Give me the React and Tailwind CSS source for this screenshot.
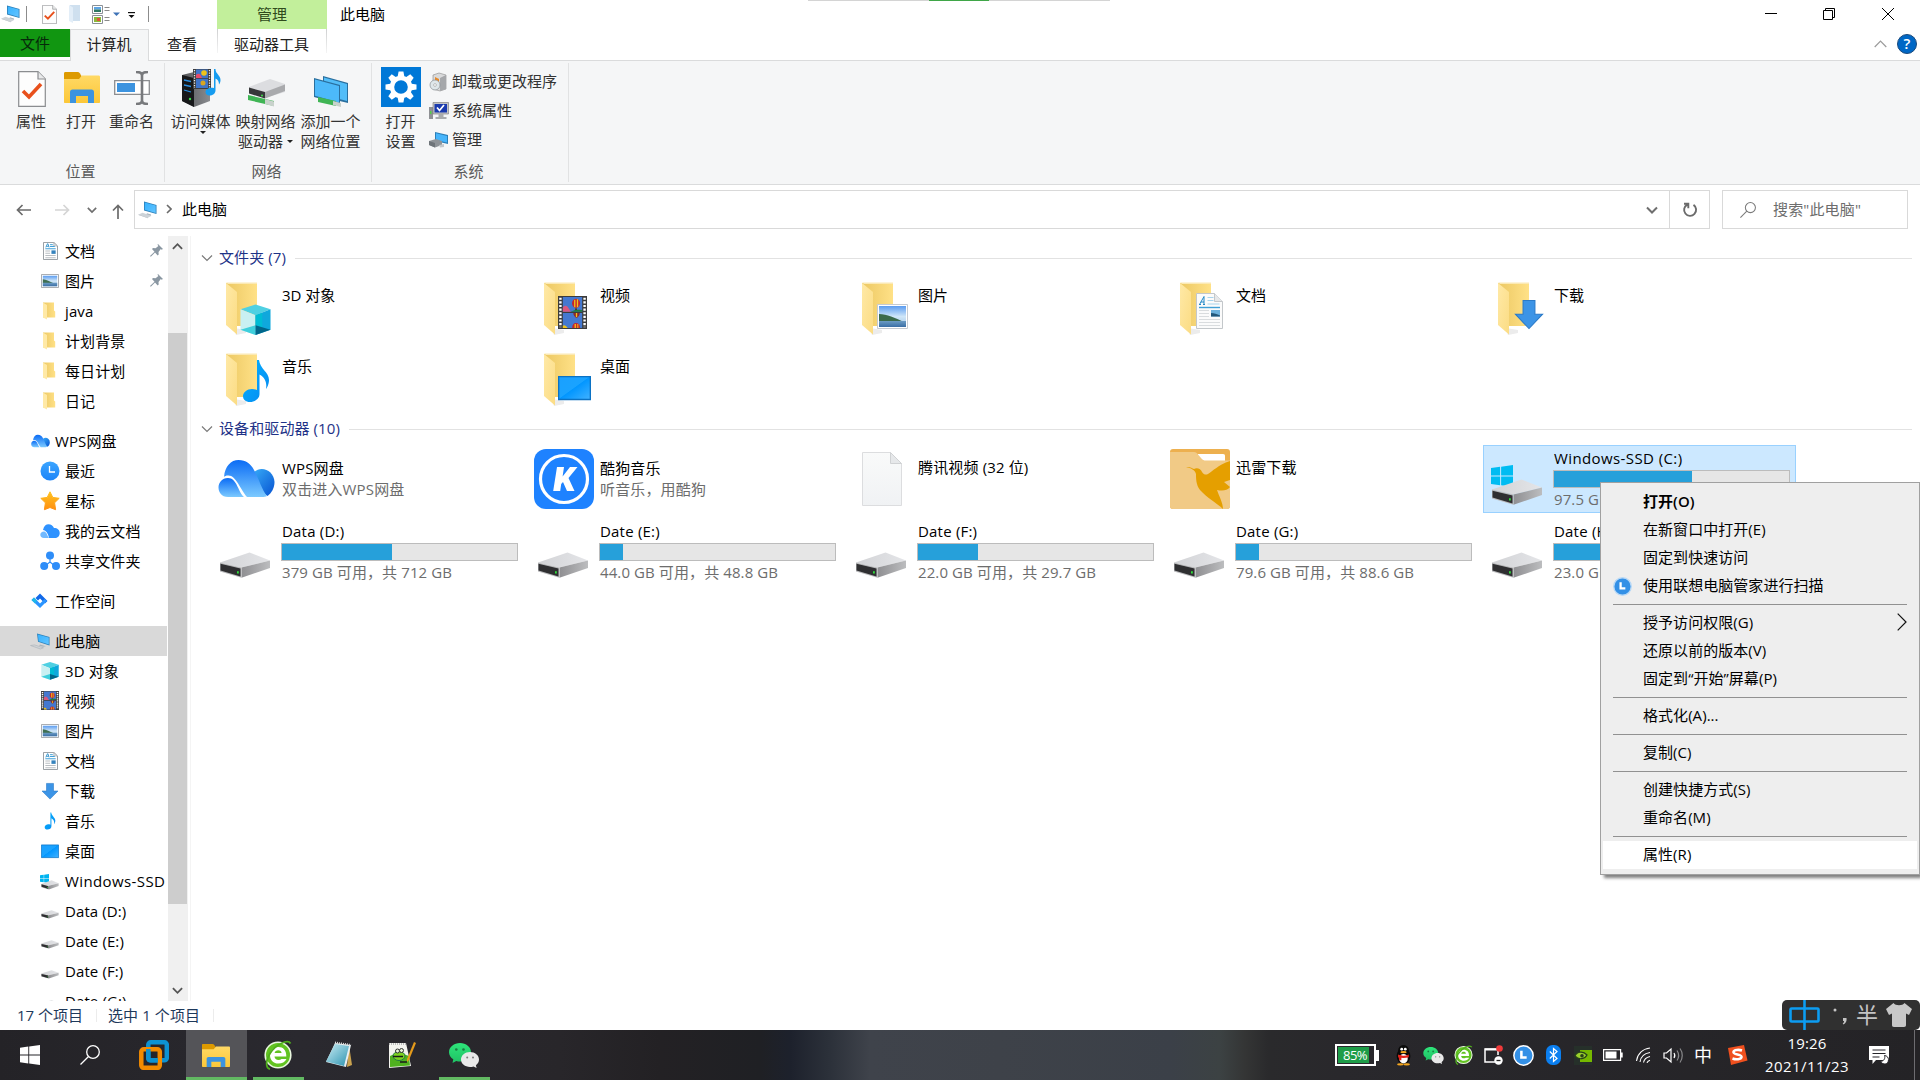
import React from 'react';

/* ---------- shared gradients ---------- */
function Defs() {
  return (
    <svg className="absolute w-0 h-0" aria-hidden="true">
      <defs>
        <linearGradient id="fBack" x1="0" y1="0" x2="1" y2="0"><stop offset="0" stopColor="#ecc863" /><stop offset="1" stopColor="#ffe187" /></linearGradient>
        <linearGradient id="fFront" x1="0" y1="0" x2="1" y2="1"><stop offset="0" stopColor="#ffe9a6" /><stop offset="1" stopColor="#fbdc84" /></linearGradient>
        <linearGradient id="dTop" x1="0" y1="0" x2="1" y2="0"><stop offset="0" stopColor="#d2d3d6" /><stop offset="1" stopColor="#e4e5e8" /></linearGradient>
        <linearGradient id="dSide" x1="0" y1="0" x2="1" y2="0"><stop offset="0" stopColor="#8f8f92" /><stop offset="1" stopColor="#bcbdbf" /></linearGradient>
        <linearGradient id="scr" x1="0" y1="0" x2="1" y2="1"><stop offset="0" stopColor="#35b2ff" /><stop offset="1" stopColor="#63c4ff" /></linearGradient>
        <linearGradient id="sky" x1="0" y1="0" x2="0" y2="1"><stop offset="0" stopColor="#5b9cf0" /><stop offset=".5" stopColor="#cfe6f8" /><stop offset="1" stopColor="#a3c6e6" /></linearGradient>
        <linearGradient id="sea" x1="0" y1="0" x2="0" y2="1"><stop offset="0" stopColor="#6c9cc4" /><stop offset="1" stopColor="#3a6ea5" /></linearGradient>
        <linearGradient id="note" x1="0" y1="0" x2="1" y2="1"><stop offset="0" stopColor="#04b3ff" /><stop offset="1" stopColor="#0789f0" /></linearGradient>
        <linearGradient id="desk" x1="0" y1="0" x2="1" y2="1"><stop offset="0" stopColor="#1aa0ff" /><stop offset=".48" stopColor="#1aa3ff" /><stop offset=".5" stopColor="#0296ff" /><stop offset="1" stopColor="#42b2ff" /></linearGradient>
        <linearGradient id="c1" x1="0" y1="0" x2="0" y2="1"><stop offset="0" stopColor="#0b6cf5" /><stop offset="1" stopColor="#7ccaff" /></linearGradient>
        <linearGradient id="c2" x1="0" y1="0" x2="1" y2="1"><stop offset="0" stopColor="#38adf8" /><stop offset="1" stopColor="#0753d2" /></linearGradient>
        <linearGradient id="blu" x1="0" y1="0" x2="0" y2="1"><stop offset="0" stopColor="#3ba5ff" /><stop offset="1" stopColor="#1c84f8" /></linearGradient>
        <linearGradient id="star" x1="0" y1="0" x2="0" y2="1"><stop offset="0" stopColor="#ffc31f" /><stop offset="1" stopColor="#ff8f12" /></linearGradient>
        <linearGradient id="papr" x1="0" y1="0" x2="0" y2="1"><stop offset="0" stopColor="#f9fafa" /><stop offset="1" stopColor="#f0f2f4" /></linearGradient>
        <linearGradient id="exp" x1="0" y1="0" x2="0" y2="1"><stop offset="0" stopColor="#ffd965" /><stop offset="1" stopColor="#fcc738" /></linearGradient>
        <linearGradient id="grn" x1="0" y1="0" x2="0" y2="1"><stop offset="0" stopColor="#2ee57a" /><stop offset="1" stopColor="#1fc064" /></linearGradient>
        <linearGradient id="npad" x1="0" y1="0" x2="1" y2="1"><stop offset="0" stopColor="#c9ecf4" /><stop offset="1" stopColor="#2c93b0" /></linearGradient>
        <linearGradient id="tower" x1="0" y1="0" x2="1" y2="0"><stop offset="0" stopColor="#55575a" /><stop offset="1" stopColor="#8a8c90" /></linearGradient>
      </defs>
    </svg>
  );
}

/* ---------- base icons ---------- */
function PC({ className = 'w-5 h-5' }) {
  return (
    <svg className={className} viewBox="0 0 20 20">
      <path d="M6 1.500 18.500 5v9L6 10.500z" fill="#2b7fb8" />
      <path d="M6.800 2.500 17.700 5.600v7.300L6.800 9.700z" fill="url(#scr)" />
      <path d="m9 13.300 4 1.200v1.200l-3 .6-2.500-.8z" fill="#aab4bc" />
      <path d="m.5 14.400 4-1.600 9 2.900-3.500 2z" fill="#cdd3d8" />
      <path d="m.5 14.400 9.500 3.300v.6l-9.500-3.300z" fill="#a3abb2" />
    </svg>
  );
}
function PCSmall() {
  return (
    <svg className="w-5 h-5" viewBox="0 0 20 20">
      <path d="M7 2.500 19.500 6v8.500L8 10.800z" fill="#2b7fb8" />
      <path d="M7.800 3.500 18.800 6.600v6.900L8.700 10.200z" fill="url(#scr)" />
      <path d="m.5 14.500 4-.6 9 2.900-3 1.200z" fill="#cfd3d6" stroke="#a3abb2" strokeWidth=".5" />
      <path d="m10 13.500 6 1.700-3 .6-4-1.200z" fill="#aab4bc" />
    </svg>
  );
}
function Cube({ className = 'w-5 h-5' }) {
  return (
    <svg className={className} viewBox="0 0 32 32">
      <path d="M16 0 31.500 5 16 11 .5 5z" fill="#4fd0e2" />
      <path d="M.5 5 16 11v20.500L.5 26z" fill="#c9f0f2" />
      <path d="M31.500 5 16 11v20.500L31.500 26z" fill="#0fa8dc" />
      <path d="M16 11 23 8.500V24L16 21.500z" fill="#00bcd4" />
      <path d="M.5 26 16 21.500v10z" fill="#3fcfdc" />
      <path d="M31.500 26 16 21.500v10z" fill="#00668a" />
    </svg>
  );
}
function Film({ className = 'w-5 h-5' }) {
  return (
    <svg className={className} viewBox="0 0 18 20" preserveAspectRatio="none">
      <path d="M0 0h18v20H0z" fill="#3c3c3c" />
      <path d="M3 .6h12v8.900H3zM3 10.300h12v9.100H3z" fill="#4478cf" />
      <path d="M3 7c1-1.600 2-1.200 3-.5l2 3H3z" fill="#d9587e" />
      <path d="M3 18c1-.8 2 0 3 1.400H3z" fill="#f0c419" />
      <path d="M8 9.500c2-1.200 4-1.500 7-1v1z" fill="#1f7a3d" />
      <ellipse cx="11.200" cy="4.400" rx="2.500" ry="2.800" fill="#c6252c" /><path d="M10 2.200h.8v4.600H10zM11.700 2h.8v4.800h-.8z" fill="#f0c419" /><path d="M10.600 7.500h1.200v1h-1.200z" fill="#5a3a1a" />
      <path d="M9.500 10.300h4c0 1.500-1 2.500-2 3-1-.5-2-1.500-2-3z" fill="#8e2a2a" /><path d="M11.100 10.300h.8v2.500h-.8z" fill="#f0c419" />
      <path d="M8.800 19.400c0-2 1-3 2.400-3s2.500 1 2.500 3z" fill="#c6252c" /><path d="M10.300 17h.8v2.400h-.8zM12 17h.6v2.400H12z" fill="#f0c419" />
      <path d="M1.500 1v18M16.500 1v18" stroke="#fff" strokeWidth="1.500" strokeDasharray="1.300 .9" />
    </svg>
  );
}
function Photo({ className = 'w-5 h-5' }) {
  return (
    <svg className={className} viewBox="0 0 20 16" preserveAspectRatio="none">
      <path d="M.5.500h19v15H.5z" fill="#fff" stroke="#9a9ea3" />
      <path d="M2 2h16v12H2z" fill="url(#sky)" />
      <path d="M2 6c4 .5 8 2.500 12 4.500H2z" fill="#3f6f52" />
      <path d="M2 10h16v4H2z" fill="url(#sea)" />
    </svg>
  );
}
function Doc({ className = 'w-5 h-5' }) {
  return (
    <svg className={className} viewBox="0 0 16 20" preserveAspectRatio="none">
      <path d="M.5.500h11L15.500 4.500v15H.5z" fill="#fff" stroke="#8f959b" />
      <path d="M11.500.500v4h4z" fill="#dfe3e6" stroke="#8f959b" strokeWidth=".6" />
      <path d="m3 6 1.700-4h.6L6.500 6M3.700 4.800h2.300" stroke="#1e88c7" strokeWidth=".9" fill="none" />
      <path d="M7.500 3h3M7.500 5h5M2.500 7.500h11" stroke="#2f97d4" strokeWidth="1" />
      <path d="M2.500 10h5M2.500 12.500h5M2.500 15h11M2.500 17.500h11" stroke="#a9afb5" strokeWidth=".9" />
      <path d="M9 9.300h4.500v3.900H9z" fill="#3683bd" />
    </svg>
  );
}
function SmallFolder() {
  return (
    <svg className="w-5 h-5" viewBox="0 0 20 20">
      <path d="M3 1.500h11v8l1.200 1v6H3z" fill="url(#fBack)" />
      <path d="m3 1.500 4 2.500v14.500l-4-2z" fill="#ffe9a6" />
    </svg>
  );
}
function Arrow({ className = 'w-5 h-5' }) {
  return <svg className={className} viewBox="0 0 20 20" preserveAspectRatio="none"><path d="M6.500 1.500h7v8H18L10 18 2 9.500h4.500z" fill="#3c94e6" stroke="#2a7ac8" strokeWidth=".6" /></svg>;
}
function Note({ className = 'w-5 h-5' }) {
  return (
    <svg className={className} viewBox="0 0 28 44">
      <path d="M15 1h2c1 9 10 12 10 20 0 4-2 8-3 9 1-6-.5-11-6.500-14.500V35c0 5-5 8-9.500 8S1 40.500 1 37s4-7 9-7c2 0 3.500.4 5 1z" fill="url(#note)" />
    </svg>
  );
}
function Desk({ className = 'w-5 h-5' }) {
  return (
    <svg className={className} viewBox="0 0 20 16" preserveAspectRatio="none">
      <path d="M.4 1h19.200v13.500H.4z" fill="url(#desk)" stroke="#0b72c4" strokeWidth=".8" />
    </svg>
  );
}
function Drive({ className = 'w-5 h-5' }) {
  return (
    <svg className={className} viewBox="0 0 52 27" preserveAspectRatio="none">
      <path d="m1 10.500 29.500-10 20.500 8-28.500 7z" fill="url(#dTop)" />
      <path d="M22.500 15.500 51 8.500v7.500L22.500 25.800z" fill="url(#dSide)" />
      <path d="m1 10.500 21.500 5v10.300L1 19.500z" fill="#b9babc" />
      <path d="m1.500 11.800 20 4.800v8L1.500 18.500z" fill="#2f2f31" />
      <path d="M18 19.200h1.800v2.400H18z" fill="#2fe03a" />
    </svg>
  );
}
function Win({ className = 'w-5 h-5', fill = '#fff' }) {
  return (
    <svg className={className} viewBox="0 0 20 20">
      <path d="M0 2.800 8.300 1.600v7.900H0zM9.200 1.500 20 0v9.500H9.200zM0 10.400h8.300v8L0 17.200zM9.200 10.400H20V20L9.200 18.500z" fill={fill} />
    </svg>
  );
}
function Cloud({ className = 'w-5 h-5' }) {
  return (
    <svg className={className} viewBox="0 0 57 39">
      <path d="M36 13c8-7 20-1 20.500 10 0 6-3 11-7 14L34 26z" fill="url(#c2)" />
      <path d="M6 18C7 7 13 1 20.500 1 28 1 33 5 36 11c5 9 8 20 13 26-1 .7-3 1-5 1H29C22 30 18 16 10 16.500c-2 0-3 .5-4 1.500z" fill="url(#c1)" />
      <path d="M10 19c9 0 10 14 16 19H10C3.500 38 .5 33 .5 28.500S4 19 10 19z" fill="url(#c1)" />
    </svg>
  );
}
function Explorer({ className }) {
  return (
    <svg className={className} viewBox="0 0 36 31" preserveAspectRatio="none">
      <path d="M0 1.500C0 .5.500 0 1.500 0h12c1 0 1.700.4 2.300 1.200L17.500 4v4H0z" fill="#dd9a00" />
      <path d="M0 7h15l3-3.500h16.500c1 0 1.500.5 1.500 1.500v25c0 .6-.4 1-1 1H1c-.6 0-1-.4-1-1z" fill="url(#exp)" />
      <path d="M6 20c0-1.500 1-2.500 2.500-2.500h19c1.500 0 2.500 1 2.500 2.500v14h-6V24H12v10H6z" fill="#3c93df" />
    </svg>
  );
}
function CheckPage({ className }) {
  return (
    <svg className={className} viewBox="0 0 28 36">
      <path d="M.7.700H20L27.300 8v27.300H.7z" fill="#fdfdfd" stroke="#8b8d90" strokeWidth="1.200" />
      <path d="M20 .7V8h7.300" fill="#e8e9ea" stroke="#8b8d90" strokeWidth="1.200" />
      <path d="m5 20 6 6L23 13" fill="none" stroke="#e8501c" strokeWidth="3.600" />
    </svg>
  );
}
function LCircle({ className, ring = '#fff' }) {
  return (
    <svg className={className} viewBox="0 0 20 20">
      <circle cx="10" cy="10" r="9.200" fill="#3390e6" stroke={ring} strokeWidth="1.400" />
      <path d="M8 5.500V12h5" fill="none" stroke="#fff" strokeWidth="2.400" />
    </svg>
  );
}
function WeChat({ className }) {
  return (
    <svg className={className} viewBox="0 0 30 25">
      <path d="M11 0c6 0 11 4 11 9.200S17 18.500 11 18.500c-1.300 0-2.600-.2-3.700-.6L3.500 20l.8-3.700C1.700 14.600 0 12 0 9.200 0 4 5 0 11 0z" fill="url(#grn)" />
      <path d="M21 9c5 0 9 3.300 9 7.600 0 2.300-1.200 4.300-3.100 5.700l.7 2.600-3.100-1.500c-1.100.4-2.300.6-3.500.6-5 0-9-3.200-9-7.400S16 9 21 9z" fill="#e9e9e9" />
      <g fill="#1b7c44"><circle cx="7.300" cy="6.500" r="1.300" /><circle cx="14.500" cy="6.500" r="1.300" /></g>
      <g fill="#7c7c7c"><circle cx="18.200" cy="14.500" r="1" /><circle cx="24" cy="14.500" r="1" /></g>
    </svg>
  );
}
function E360({ className }) {
  return (
    <svg className={className} viewBox="0 0 28 30">
      <circle cx="14" cy="15" r="12.800" fill="#62c322" stroke="#e9f7df" strokeWidth="1.600" />
      <path d="M22.500 19c-1.500 3-4.500 4.500-8 4.500-5 0-8.500-3.500-8.500-8.300S9.500 7 14.300 7c5 0 8.200 3.300 8 9.500H10.500c.2 2 1.700 3.500 4 3.500 1.300 0 2.300-.3 3-1zM10.600 13h7c-.2-1.700-1.400-2.700-3.300-2.700s-3.300 1-3.700 2.700z" fill="#fff" />
      <path d="M26.500 3.500C24-1 12 4 6 13.500 1.500 21 1.500 28 6 29" fill="none" stroke="#4fae1d" strokeWidth="1.800" />
    </svg>
  );
}
function Chevron({ className, color = '#6e6e6e', w = 1.2 }) {
  return <svg className={className} viewBox="0 0 12 12"><path d="m1 3.500 5 5 5-5" fill="none" stroke={color} strokeWidth={w} /></svg>;
}
function Tri({ className = 'w-[6px] h-[3px]' }) {
  return <svg className={className} viewBox="0 0 6 3"><path d="M0 0h6L3 3z" fill="#222" /></svg>;
}
function Lens({ className, stroke, w }) {
  return <svg className={className} viewBox="0 0 20 20" fill="none" stroke={stroke} strokeWidth={w}><circle cx="13" cy="7" r="6.300" /><path d="M8.500 11.500.5 19.500" /></svg>;
}

/* ---------- title bar and ribbon ---------- */
function TitleBar() {
  return (
    <div className="h-[29px] flex items-stretch">
      <div className="w-[217px] flex items-center pl-[1px] pb-px">
        <PC />
        <div className="w-px h-[16px] bg-[#8c8c8c] ml-[5px]" />
        <CheckPage className="w-[15px] h-[19px] ml-[15px]" />
        <svg className="w-[13px] h-[18px] ml-[11px]" viewBox="0 0 13 18"><path d="M2 0h10v16H2z" fill="#cfe0ef" /><path d="m1 0 4 2.500V18l-4-2z" fill="#e3eef8" /></svg>
        <svg className="w-[28px] h-[19px] ml-[11px]" viewBox="0 0 28 19"><path d="M.5.500h10v8H.5zM.5 10.500h10v8H.5z" fill="#fff" stroke="#8a9096" /><path d="M2 2h7v2.500H2z" fill="#5da4e4" /><path d="M2 4.500h7V7H2z" fill="#2f7a63" /><path d="M2 12h7v5H2z" fill="#8cb83a" /><path d="M5 13h3v3H5z" fill="#e0553a" /><path d="M12.500 2.500h5M12.500 5.500h5M12.500 12.500h5M12.500 15.500h5" stroke="#8a8a8a" /><path d="M21 7.500h7l-3.500 3.500z" fill="#3f73b7" /></svg>
        <svg className="w-[7px] h-[6px] ml-[8px] mt-[2px]" viewBox="0 0 7 6"><path d="M0 .6h7" stroke="#111" strokeWidth="1.200" /><path d="M.5 3h6l-3 3z" fill="#111" /></svg>
        <div className="w-px h-[16px] bg-[#8c8c8c] ml-[13px]" />
      </div>
      <div className="w-[110px] bg-[#c2ef9b] flex items-center justify-center pb-px text-[#2f4a1c]">管理</div>
      <div className="flex-1 flex items-center pl-[13px] pb-px text-black">此电脑</div>
      <div className="flex items-center pr-[26px] pb-[2px]">
        <svg className="w-[13px] h-[13px]" viewBox="0 0 13 13"><path d="M0 6.500h12" stroke="#000" /></svg>
        <svg className="w-[12px] h-[12px] ml-[45px]" viewBox="0 0 12 12" fill="none" stroke="#000"><path d="M.5 2.500h9v9h-9zM2.500 2.500v-2h9v9h-2" /></svg>
        <svg className="w-[12px] h-[12px] ml-[47px]" viewBox="0 0 12 12" stroke="#000"><path d="m0 0 12 12M12 0 0 12" /></svg>
      </div>
    </div>
  );
}
function Tabs() {
  return (
    <div className="h-[32px] flex items-stretch border-b border-[#dadbdc] text-[#222]">
      <div className="w-[70px] h-[28px] bg-[#119611] flex items-center justify-center text-[#06290a]">文件</div>
      <div className="w-[79px] h-[32px] relative z-10 bg-[#f5f6f7] border border-b-0 border-[#dadbdc] flex items-center justify-center pr-px pb-[2px]">计算机</div>
      <div className="w-[68px] flex items-center justify-center pr-[2px] pb-px">查看</div>
      <div className="w-[110px] mb-[7px] bg-linear-to-b from-[#cfd0d1] to-[#f4f4f4] px-px"><div className="h-[30px] pr-px bg-white flex items-center justify-center">驱动器工具</div></div>
      <div className="flex-1 flex items-center justify-end pr-[3px] pb-[2px]">
        <svg className="w-[13px] h-[8px]" viewBox="0 0 13 8"><path d="m.7 7 5.800-6 5.800 6" fill="none" stroke="#9b9b9b" strokeWidth="1.200" /></svg>
        <div className="w-5 h-5 ml-[10px] rounded-full bg-[#0067c5] border border-[#1b4a7c] text-white text-[15px] font-semibold leading-none flex items-center justify-center">?</div>
      </div>
    </div>
  );
}
function Big({ w, icon, lines, arrow, inline }) {
  return (
    <div className="flex flex-col items-center flex-none" style={{ width: w }}>
      <div className="h-[44px] flex items-end justify-center mb-[4px]">{icon}</div>
      {lines.map((l, i) => (
        <div key={l} className="h-[20px] flex items-center whitespace-nowrap">
          {l}{inline && i === lines.length - 1 && <Tri className="w-[6px] h-[3px] ml-[4px]" />}
        </div>
      ))}
      {arrow && <Tri className="w-[6px] h-[3px] ml-[4px]" />}
    </div>
  );
}
function Group({ w, label, children }) {
  return (
    <div className="flex flex-col border-r border-[#e1e2e3] h-[119px] mt-[2px] flex-none" style={{ width: w }}>
      <div className="flex h-[98px]">{children}</div>
      <div className="h-[20px] pr-[3px] flex items-center justify-center text-[#5a5a5a]">{label}</div>
    </div>
  );
}
function Ribbon() {
  return (
    <div className="h-[124px] bg-[#f5f6f7] border-b border-[#dadbdc] flex text-[#333]">
      <Group w={165} label="位置">
        <div className="w-[8px]" />
        <Big w={46} icon={<CheckPage className="w-[28px] h-[36px] ml-[2px]" />} lines={['属性']} />
        <Big w={54} icon={<Explorer className="w-[36px] h-[31px] mb-[4px] ml-[2px]" />} lines={['打开']} />
        <Big w={47} icon={
          <svg className="w-[36px] h-[34px] mb-[2px] ml-px" viewBox="0 0 36 34">
            <path d="M.7 9.700h34.600v13.600H.7z" fill="#fff" stroke="#8b8d90" strokeWidth="1.300" /><path d="M3 12h18v9H3z" fill="#3c93df" />
            <path d="M22 1c3 0 6 .5 6 3.500v25C28 32.500 25 33 22 33M34 1c-3 0-6 .5-6 3.500v25c0 3 3 3.500 6 3.500" fill="none" stroke="#77797c" strokeWidth="2.600" />
          </svg>} lines={['重命名']} />
      </Group>
      <Group w={207} label="网络">
        <div className="w-[3px]" />
        <Big w={65} arrow icon={
          <svg className="w-[40px] h-[38px]" viewBox="0 0 40 38">
            <path d="m1 6 12-3 16 3v26l-16 6-12-6z" fill="url(#tower)" /><path d="m1 6 12 3v29L1 32z" fill="#17181a" />
            <path d="m3 11 7 1.500M3 16l7 1.500M3 21l7 2" stroke="#2b8fe0" strokeWidth="1.300" /><circle cx="9" cy="30" r="1.200" fill="#3be04a" />
            <path d="M12 0h18v20H12z" fill="#3d3d3d" /><path d="M15 .6h12v8.600H15zM15 10h12v9H15z" fill="#3e74c9" /><path d="M15 6c3-3 5 0 6 3h-6z" fill="#e64a6a" /><circle cx="23" cy="4" r="2.800" fill="#f0c419" /><circle cx="22" cy="14" r="2.500" fill="#d8a520" />
            <path d="M13.500 1v18M28.500 1v18" stroke="#eee" strokeWidth="1.300" strokeDasharray="1.300 1.200" />
            <path d="M33 0h1.500c0 5 5 6 5 11 0 2-.8 4-1.500 4.500 0-3-1-5-3.500-6v12c0 3-3 5-6 5-2.500 0-4-1.500-4-3.500 0-3 4-5 8.500-4z" fill="#169cf0" />
          </svg>} lines={['访问媒体']} />
        <Big w={65} inline icon={
          <svg className="w-[40px] h-[28px]" viewBox="0 0 40 28">
            <path d="m2 16 26 6v5L2 21z" fill="#40b555" /><path d="m19 20 9 2.500v5L19 25z" fill="#c9d2cc" />
            <path d="m3 8 21-8 15 5v8L19 19 3 14z" fill="#dcdde0" /><path d="m19 13 20-7.500V12L19 19.500z" fill="#a9aaad" /><path d="m3 8.500 16 4.500v6.500L3 14.500z" fill="#37383a" /><circle cx="16" cy="16.500" r="1" fill="#3be04a" />
          </svg>} lines={['映射网络', '驱动器']} />
        <Big w={65} icon={
          <svg className="w-[36px] h-[32px]" viewBox="0 0 36 32">
            <path d="m10 1 25 7v20l-25-6z" fill="#2a6f9e" /><path d="m11 2.500 23 6.500v17l-23-6z" fill="#52bdf8" />
            <path d="m1 3 26 7v19L1 22z" fill="#2a6f9e" /><path d="m2 4.500 24 6.500v16.500L2 20.800z" fill="#4cb9fa" />
            <path d="m5 22 18 4v5L5 27z" fill="#40b555" /><path d="m20 26 8 2v4l-8-2z" fill="#c9d2cc" />
          </svg>} lines={['添加一个', '网络位置']} />
      </Group>
      <Group w={197} label="系统">
        <div className="w-[9px]" />
        <Big w={39} icon={
          <div className="w-[40px] h-[40px] bg-[#0078d7] flex flex-none items-center justify-center">
            <svg className="w-[32px] h-[32px]" viewBox="-16 -16 32 32" fill="#fff">
              {[0, 45, 90, 135, 180, 225, 270, 315].map((a) => <path key={a} d="M-3.600-9-2.400-15.500h4.800L3.600-9z" transform={`rotate(${a})`} />)}
              <circle r="9" fill="none" stroke="#fff" strokeWidth="4.400" />
            </svg>
          </div>} lines={['打开', '设置']} />
        <div className="flex flex-col pt-[4px] pl-[9px]">
          {[
            ['卸载或更改程序', <svg key="a" className="w-[19px] h-[20px]" viewBox="0 0 19 20"><path d="m4 3 6-2 7 2v14l-6 2-7-2z" fill="#d9dadb" stroke="#888" strokeWidth=".6" /><path d="m6 5 4 2v8H6z" fill="#e88a2a" /><path d="m11 6 6-3v14l-6 2z" fill="#a5a7aa" /><circle cx="6" cy="13" r="5" fill="#dfe7ea" stroke="#8a8f93" strokeWidth=".7" /><circle cx="6" cy="13" r="1.400" fill="#fff" stroke="#888" strokeWidth=".5" /></svg>],
            ['系统属性', <svg key="b" className="w-[20px] h-[18px]" viewBox="0 0 20 18"><path d="M0 5h4v12H0z" fill="#8f9194" /><path d="M4 .5h15.500v11.500H4z" fill="#c3c4c6" stroke="#777" strokeWidth=".6" /><path d="M5.500 2h12.500v8.500H5.500z" fill="#1a3aae" /><path d="m8 5.500 2.500 3L15 3" fill="none" stroke="#fff" strokeWidth="1.700" /><path d="M9.500 12h5v3h3v2h-11v-2h3z" fill="#a9abad" /><path d="M1 9h1.500v3H1z" fill="#54cf4c" /></svg>],
            ['管理', <svg key="c" className="w-[20px] h-[17px]" viewBox="0 0 20 17"><path d="m6 1 13 3v9L6 10z" fill="#2b7fb8" /><path d="m7 2.300 11 2.600v6.700L7 9z" fill="#47b5fb" /><path d="m0 10 7-2 6 2v4l-7 2.500L0 14z" fill="#8e9398" /><path d="m0 10 6 2v4.500L0 14z" fill="#6e7479" /><path d="m10 14 5-1v3l-4 .6z" fill="#c3c8cc" /></svg>],
          ].map(([t, ic]) => <div key={t} className="h-[29px] flex items-center whitespace-nowrap"><div className="w-[20px] mr-[3px] flex">{ic}</div>{t}</div>)}
        </div>
      </Group>
    </div>
  );
}
function AddressBar() {
  return (
    <div className="h-[51px] flex items-start pt-[5px]">
      <div className="w-[134px] h-[39px] flex items-center pl-[16px]">
        <svg className="w-[15px] h-[12px]" viewBox="0 0 15 12" fill="none" stroke="#6b6b6b" strokeWidth="1.700"><path d="M15 6H1.500M6.500 1l-5 5 5 5" /></svg>
        <svg className="w-[15px] h-[12px] ml-[24px]" viewBox="0 0 15 12" fill="none" stroke="#d5d5d5" strokeWidth="1.700"><path d="M0 6h13.500M8.500 1l5 5-5 5" /></svg>
        <Chevron className="w-[10px] h-[10px] ml-[17px]" w={2} />
        <svg className="w-[12px] h-[15px] ml-[15px] mt-[3px]" viewBox="0 0 12 15" fill="none" stroke="#6b6b6b" strokeWidth="1.700"><path d="M6 15V1.500M1 6.500l5-5 5 5" /></svg>
      </div>
      <div className="w-[1576px] h-[39px] border border-[#d9d9d9] flex items-center">
        <PC className="w-5 h-5 ml-[3px]" />
        <svg className="w-[6px] h-[10px] ml-[8px] -mt-[2px]" viewBox="0 0 6 10" fill="none" stroke="#6b6b6b" strokeWidth="1.600"><path d="m1 1 4 4-4 4" /></svg>
        <span className="ml-[10px] flex-1 text-black">此电脑</span>
        <Chevron className="w-[12px] h-[12px] mr-[11px] mt-px" w={2} />
        <div className="w-[40px] h-full border-l border-[#d9d9d9] flex items-center justify-center pl-px">
          <svg className="w-[16px] h-[16px]" viewBox="0 0 16 16" fill="none" stroke="#6b6b6b" strokeWidth="1.900"><path d="M11.500 2.900a6 6 0 1 1-6.300-.3M2 1.800h4.300v4.400" /></svg>
        </div>
      </div>
      <div className="w-[186px] h-[39px] ml-[12px] border border-[#d9d9d9] flex items-center text-[#6d6d6d]">
        <Lens className="w-[16px] h-[16px] ml-[17px]" stroke="#7a7a7a" w={1.3} />
        <span className="ml-[17px] tracking-[0.15px]">搜索"此电脑"</span>
      </div>
    </div>
  );
}

/* ---------- navigation pane ---------- */
const wsIcon = <svg className="w-5 h-5" viewBox="0 0 20 20"><path d="m10 2.500 7.500 7.500-2.500 2.500L10 7.500 8 9.500 5.500 7z" fill="#1269e8" /><path d="M4 6.500 10 12.500l4.500-4.500L17 10l-7 7-8.500-8z" fill="#2a94ff" /><path d="m4 6.500 3 3L5 12.500 1.500 9z" fill="#1fb8e8" /></svg>;
const sideDrive = <Drive className="w-[18px] h-[9px] mt-[6px]" />;
const nav = [
  [2, <Doc className="w-[15px] h-[18px]" />, '文档', 1],
  [2, <Photo className="w-[18px] h-[14px]" />, '图片', 1],
  [2, <SmallFolder />, 'java'], [2, <SmallFolder />, '计划背景'], [2, <SmallFolder />, '每日计划'], [2, <SmallFolder />, '日记'],
  'gap',
  [1, <Cloud className="w-[19px] h-[14px]" />, 'WPS网盘'],
  [2, <svg className="w-[20px] h-[20px]" viewBox="0 0 20 20"><circle cx="10" cy="10" r="9.500" fill="url(#blu)" /><path d="M9.500 5v6h5.500" fill="none" stroke="#fff" strokeWidth="1.300" /></svg>, '最近'],
  [2, <svg className="w-[20px] h-[20px]" viewBox="0 0 20 20"><path d="m10 .8 2.800 5.600 6.400.9-4.600 4.500 1 6.900L10 16.500l-5.600 2.200 1-6.900L.8 7.300l6.400-.9z" fill="url(#star)" stroke="url(#star)" strokeLinejoin="round" /></svg>, '星标'],
  [2, <svg className="w-[20px] h-[14px]" viewBox="0 0 20 14"><path d="M3 6C4 2 6 .3 8.500.3S13 2 14 4c3.500 0 5.700 2 5.700 5s-2 5-5 5H9C8 9 6 6.500 3 6z" fill="#2e92ff" /><path d="M4 7.500c3 .5 3 4 5 6.500H4C1.500 14 .3 12.500.3 10.800S1.800 7.500 4 7.500z" fill="#71b9ff" /></svg>, '我的云文档'],
  [2, <svg className="w-[20px] h-[20px]" viewBox="0 0 20 20" fill="#2e8df8"><circle cx="10" cy="4.500" r="4" /><circle cx="4.200" cy="15" r="4" /><circle cx="16" cy="15" r="4" /><path d="M10 6v5l-5 4M10 11l5 4" fill="none" stroke="#2e8df8" strokeWidth="1.200" /></svg>, '共享文件夹'],
  'gap',
  [1, wsIcon, '工作空间'],
  'gap',
  [1, <PCSmall />, '此电脑', 0, 1],
  [2, <Cube className="w-[18px] h-[18px]" />, '3D 对象'],
  [2, <Film className="w-[18px] h-[19px] mb-[2px]" />, '视频'],
  [2, <Photo className="w-[18px] h-[14px]" />, '图片'],
  [2, <Doc className="w-[15px] h-[18px]" />, '文档'],
  [2, <Arrow className="w-[20px] h-[19px]" />, '下载'],
  [2, <Note className="w-[12px] h-[18px] mb-px" />, '音乐'],
  [2, <Desk className="w-[18px] h-[15px]" />, '桌面'],
  [2, <div className="w-[20px] h-[15px] flex flex-col"><Win className="w-[9px] h-[9px] flex-none" fill="#00b4f0" /><Drive className="w-[18px] h-[10px] ml-[1px] -mt-[3px] flex-none" /></div>, <span className="tracking-[0.4px]">Windows-SSD</span>],
  [2, sideDrive, 'Data (D:)'],
  [2, sideDrive, 'Date (E:)'],
  [2, sideDrive, 'Date (F:)'],
  [2, sideDrive, 'Date (G:)'],
];
function NavPane() {
  return (
    <div className="flex w-[191px] h-[765px] overflow-hidden border-r border-[#f4f4f4]">
      <div className="w-[168px] flex flex-col overflow-hidden text-black">
        {nav.map((n, i) => n === 'gap' ? <div key={i} className="h-[10px] flex-none" /> : (
          <div key={i} className={(n[4] ? 'bg-[#d9d9d9] ' : '') + (n[0] === 1 ? 'pl-[30px] ' : 'pl-[40px] ') + 'w-[167px] h-[30px] flex-none flex items-center overflow-hidden whitespace-nowrap'}>
            <div className="w-5 h-5 mr-[5px] flex-none flex items-center justify-center">{n[1]}</div>
            <span className="flex-1 tracking-[0.1px]">{n[2]}</span>
            {n[3] ? <svg className="w-[13px] h-[13px] mr-[4px] -mt-[2px]" viewBox="0 0 13 13"><path d="M8 0 13 5l-1.500.8L10.800 5 8.500 8l.2 2.500-1 1L5 8.500.8 12.800 0 12l4.500-4.300L2 5l1-1 2.600.2L8.400 2 7.500.8z" fill="#8a97a2" /></svg> : null}
          </div>
        ))}
      </div>
      <div className="w-[20px] bg-[#f0f0f0] flex flex-col items-start pl-[4px]">
        <div className="h-[97px] pt-[5px]"><Chevron className="w-[11px] h-[11px] rotate-180" color="#555" w={2} /></div>
        <div className="w-[19px] h-[571px] -ml-[4px] bg-[#cdcdcd]" />
        <div className="pt-[81px]"><Chevron className="w-[11px] h-[11px]" color="#555" w={2} /></div>
      </div>
    </div>
  );
}

/* ---------- content ---------- */
function Header({ children }) {
  return (
    <div className="h-[28px] flex items-center text-[#1e3287]">
      <Chevron className="w-[12px] h-[12px] mr-[6px] mb-px" color="#7a7a7a" />
      <span className="mb-[2px] tracking-[0.1px]">{children}</span>
      <div className="flex-1 h-px bg-[#e2e2e2] ml-[9px]" />
    </div>
  );
}
const overlays = {
  '3D 对象': <Cube className="w-[31px] h-[32px] ml-[14px] mt-[22px]" />,
  '视频': <Film className="w-[29px] h-[33px] ml-[14px] mt-[14px]" />,
  '图片': (
    <svg className="w-[31px] h-[25px] ml-[15px] mt-[22px]" viewBox="0 0 31 25"><path d="M.5.500h30v24H.5z" fill="#fff" stroke="#c6cbd1" /><path d="M2 2h27v21H2z" fill="url(#sky)" /><path d="M2 10c8 0 16 4 25 8H2z" fill="#3b6a4b" /><path d="M2 17h27v6H2z" fill="url(#sea)" /></svg>
  ),
  '文档': (
    <svg className="w-[27px] h-[36px] ml-[16px] mt-[11px]" viewBox="0 0 27 36"><path d="M.5.500h18l8 8v27H.5z" fill="#fbfbfb" stroke="#c3c7ca" /><path d="M18.500.500v8h8" fill="#e6e8ea" stroke="#c3c7ca" /><path d="m3.500 11.500 4.500-8v8M4.800 9H8M3 11.500h2M7 11.500h2" stroke="#2389c8" fill="none" /><path d="M11.500 4.500h6M11.500 7.500h6M11.500 11h12" stroke="#a6d3ec" /><path d="M3 14.500h21" stroke="#3f9fd6" strokeWidth="1.400" /><path d="M3 17.500h10M3 20.500h10M3 23.500h10M3 26.500h21M3 29.500h21M3 32.500h21" stroke="#d9dcde" /><path d="M15 17h9v6.500h-9z" fill="#6db1dc" /><path d="M15 20c3 0 6 1 9 2.500v1h-9z" fill="#22577a" /></svg>
  ),
  '下载': <Arrow className="w-[34px] h-[34px] ml-[14px] mt-[16px]" />,
  '音乐': <Note className="w-[28px] h-[44px] ml-[16px] mt-[6px]" />,
  '桌面': <Desk className="w-[33px] h-[27px] ml-[14px] mt-[22px]" />,
};
function FolderTile({ name }) {
  return (
    <div className="w-[318px] h-[71px] flex">
      <div className="grid w-[52px] ml-[17px] mr-[4px] h-[56px] mt-[8px]">
        <svg className="col-start-1 row-start-1 w-[36px] h-[54px]" viewBox="0 0 36 54">
          <path d="m10 53 10-2v-3L8 46z" fill="#ececec" />
          <path d="M0 1h31v43H10z" fill="url(#fBack)" />
          <path d="M0 .5h31v1.500H2z" fill="#fbe9b4" />
          <path d="m0 1 11 9v42.500L0 43z" fill="url(#fFront)" />
        </svg>
        <div className="col-start-1 row-start-1">{overlays[name]}</div>
      </div>
      <div className="pt-[9px] text-black leading-[24px]">{name}</div>
    </div>
  );
}
function DriveTile({ name, fill, info, selected, win }) {
  return (
    <div className={(selected ? 'bg-[#cce8ff] border-[#99d1ff] ' : 'border-transparent ') + 'w-[313px] h-[68px] border mr-[5px] flex'}>
      <div className="w-[52px] ml-[7px] mr-[10px] pt-[19px]">
        {win ? <Win className="w-[22px] h-[22px]" fill="#00bcf2" /> : <div className="h-[22px]" />}
        <Drive className="w-[52px] h-[27px] -mt-[8px]" />
      </div>
      <div className="w-[237px]">
        <div className={(win ? 'tracking-[0.4px] ' : 'tracking-[0.2px] ') + 'h-[24px] flex items-center text-black pl-px'}>{name}</div>
        <div className="h-[18px] border border-[#bcbcbc] bg-[#e6e6e6]"><div className="h-full bg-[#26a0da]" style={{ width: fill }} /></div>
        <div className="h-[22px] flex items-center text-[#6d6d6d] pl-px whitespace-nowrap tracking-[0.1px]">{info}</div>
      </div>
    </div>
  );
}
function AppTile({ icon, name, info }) {
  return (
    <div className="w-[313px] h-[68px] mr-[5px] flex items-center">
      <div className="w-[60px] h-[60px] ml-[5px] mr-[6px] flex items-center justify-center flex-none">{icon}</div>
      <div className={(info ? 'mb-px' : 'mb-[24px]') + ' tracking-[0.15px]'}>
        <div className="h-[21px] flex items-center text-black">{name}</div>
        {info && <div className="h-[21px] flex items-center text-[#6d6d6d]">{info}</div>}
      </div>
    </div>
  );
}
const kugou = (
  <svg className="w-[60px] h-[60px]" viewBox="0 0 60 60"><rect width="60" height="60" rx="12" fill="#1e82ff" /><circle cx="30" cy="30" r="23.500" fill="none" stroke="#fff" strokeWidth="3.200" /><path d="M23 18h7l-1.400 9.500L36 18h7.500L34.500 29l6 13H33l-4-9-1.800 2-1 7h-7z" fill="#fff" /></svg>
);
const blank = (
  <svg className="w-[40px] h-[54px]" viewBox="0 0 40 54"><path d="M.5.500h28l11 11v42H.5z" fill="url(#papr)" stroke="#dcdddf" /><path d="M28.500.500v11h11z" fill="#e6e8ea" stroke="#d0d2d4" /></svg>
);
const xunlei = (
  <svg className="w-[60px] h-[60px]" viewBox="0 0 60 60"><rect width="60" height="60" rx="3" fill="#edb04f" /><path d="M28 5h25c1.500 0 2 .7 2 2v8H28z" fill="#fff" /><path d="M0 3h24c2 0 3 1 4 2.500L31 9c1.500 2 3 2.500 5 2.500h24V57c0 2-1 3-3 3H3c-2 0-3-1-3-3z" fill="#f1ca86" /><path d="M16 18c4-.5 6 1 8 2 3-2 7 0 8 3 2 3 4 3 6 2 5-3 10-9 22-13v19l-6 2 6 5c-3 4-8 4-13 3 2 6 6 13 6 19-6-6-16-11-23-19-4-5-4-12-4-16-1-4-5-6-10-7z" fill="#e59f00" /></svg>
);
function Content() {
  return (
    <div className="flex-1 pl-[10px] pt-[8px] pr-[8px]">
      <Header>文件夹 (7)</Header>
      <div className="flex flex-wrap pl-[8px] pt-[2px] w-[1610px]">
        {['3D 对象', '视频', '图片', '文档', '下载', '音乐', '桌面'].map((n) => <FolderTile key={n} name={n} />)}
      </div>
      <div className="-mt-px"><Header>设备和驱动器 (10)</Header></div>
      <div className="flex flex-wrap pl-[10px] pt-[2px] w-[1610px] gap-y-[5px]">
        <AppTile icon={<Cloud className="w-[57px] h-[39px] mb-[2px]" />} name="WPS网盘" info="双击进入WPS网盘" />
        <AppTile icon={kugou} name="酷狗音乐" info="听音乐，用酷狗" />
        <AppTile icon={blank} name="腾讯视频 (32 位)" />
        <AppTile icon={xunlei} name="迅雷下载" />
        <DriveTile name="Windows-SSD (C:)" fill={138} info="97.5 GB" selected win />
        <DriveTile name="Data (D:)" fill={110} info="379 GB 可用，共 712 GB" />
        <DriveTile name="Date (E:)" fill={23} info="44.0 GB 可用，共 48.8 GB" />
        <DriveTile name="Date (F:)" fill={60} info="22.0 GB 可用，共 29.7 GB" />
        <DriveTile name="Date (G:)" fill={23} info="79.6 GB 可用，共 88.6 GB" />
        <DriveTile name="Date (H:)" fill={120} info="23.0 GB" />
      </div>
    </div>
  );
}

/* ---------- context menu ---------- */
const menu = ['打开(O)', '在新窗口中打开(E)', '固定到快速访问', '使用联想电脑管家进行扫描', '-', '授予访问权限(G)', '还原以前的版本(V)', '固定到“开始”屏幕(P)', '-', '格式化(A)...', '-', '复制(C)', '-', '创建快捷方式(S)', '重命名(M)', '-', '属性(R)'];
function ContextMenu() {
  return (
    <div className="absolute left-[1600px] top-[482px] w-[320px] h-[393px] bg-[#eeeeee] border border-[#a0a0a0] px-[2px] pt-[5px] shadow-[3px_4px_3px_-1px_rgba(0,0,0,0.5)] text-black">
      {menu.map((m, i) => m === '-'
        ? <div key={i} className="h-[9px] px-[10px] pt-[4px]"><div className="h-px bg-[#919191]" /></div>
        : (
          <div key={i} className={(i === 0 ? 'font-semibold ' : '') + (i === menu.length - 1 ? 'bg-white ' : '') + 'h-[28px] flex items-center'}>
            <div className="w-[40px] pl-[10px]">{i === 3 && <LCircle className="w-[19px] h-[19px]" ring="#b9d9f6" />}</div>
            <span className="flex-1 pb-px tracking-[0.05px]">{m}</span>
            {i === 5 && <svg className="w-[10px] h-[18px] mr-[10px] mb-[2px]" viewBox="0 0 10 18" fill="none" stroke="#111" strokeWidth="1.200"><path d="m.7.700 8.300 8.300-8.300 8.300" /></svg>}
          </div>
        ))}
    </div>
  );
}

/* ---------- taskbar ---------- */
function Slot({ w, children, active, line }) {
  return (
    <div className={(active ? 'bg-[#545458] ' : '') + 'h-[50px] flex flex-col items-center flex-none'} style={{ width: w }}>
      <div className="h-[47px] pt-[3px] flex items-center justify-center">{children}</div>
      {line && <div className="h-[3px] bg-[#62b962]" style={{ width: line }} />}
    </div>
  );
}
function Cell({ w = 30, children }) {
  return <div className="h-full flex items-center justify-center flex-none" style={{ width: w }}>{children}</div>;
}
function Taskbar() {
  return (
    <div className="h-[50px] flex bg-[linear-gradient(90deg,#242327_0px,#2a292f_300px,#28262a_560px,#232124_660px,#1f2024_760px,#1d212c_790px,#2c313a_830px,#3f434b_870px,#3e4249_1000px,#3b4048_1170px,#3c4243_1220px,#343535_1245px,#2a2a2c_1268px,#29282c_1340px,#242326_1920px)] text-white">
      <Slot w={60}><Win className="w-[20px] h-[20px]" /></Slot>
      <Slot w={60}><Lens className="w-[20px] h-[20px]" stroke="#fff" w={1.3} /></Slot>
      <Slot w={66}><svg className="w-[30px] h-[30px] ml-[2px]" viewBox="0 0 30 30" fill="none" strokeWidth="4.500"><rect x="9.300" y="2.300" width="18.500" height="18" rx="2.500" stroke="#0d92d2" /><rect x="2.300" y="9.300" width="18.500" height="18.500" rx="2.500" stroke="#f38b00" /><path d="M9.300 9v9c0 1.500 1 2.300 2.500 2.300h7" stroke="#0d92d2" /></svg></Slot>
      <Slot w={61} active line={61}><Explorer className="w-[28px] h-[23px] mr-px" /></Slot>
      <Slot w={63} line={51}><E360 className="w-[28px] h-[30px] mr-[2px]" /></Slot>
      <Slot w={60}><svg className="w-[28px] h-[28px] mr-[2px]" viewBox="0 0 28 28"><path d="m24 4 3 20-5 2z" fill="#c9a24f" /><path d="M10 2 26 4l-5 22L1 21z" fill="#e8eef0" /><path d="M10 3 24 5l-5 20L1 20.500z" fill="url(#npad)" /><path d="M10 1.500 26 4" stroke="#ddd" strokeWidth="2" strokeDasharray="1 1" /></svg></Slot>
      <Slot w={63}><svg className="w-[28px] h-[28px]" viewBox="0 0 28 28"><path d="M1 2h17l5 23-22 2z" fill="#f4f4ef" /><path d="M2 15c7-3 14-2 19 0l1 9.500L2 26z" fill="#4fb11f" /><path d="M1 3h17" stroke="#bbb" strokeWidth="2" strokeDasharray="1 1" /><ellipse cx="11" cy="15" rx="6" ry="4.500" fill="#7ed321" stroke="#274" /><circle cx="9.500" cy="10" r="2" fill="#e8f4d8" stroke="#333" /><circle cx="13.500" cy="9.500" r="2" fill="#e8f4d8" stroke="#333" /><path d="M5 15.500h10M12 21h7" stroke="#1a1a1a" strokeWidth="1.300" /><path d="m19 18 7-17 2 1-7 17-2 2z" fill="#e59b1b" /></svg></Slot>
      <Slot w={63} line={51}><WeChat className="w-[30px] h-[25px] mr-px" /></Slot>
      <div className="flex-1" />
      <Cell w={56}>
        <div className="w-[41px] h-[22px] border-[2px] border-white p-px flex"><div className="w-[31px] bg-[#1e9c48] text-[13px] leading-none tracking-[-0.5px] flex items-center pl-[5px] whitespace-nowrap">85%</div></div>
        <div className="w-[3px] h-[11px] bg-white" />
      </Cell>
      <div className="w-[3px]" />
      <Cell><svg className="w-[17px] h-[22px]" viewBox="0 0 16 20"><ellipse cx="8" cy="11" rx="6.500" ry="7.500" fill="#0a0a0a" /><ellipse cx="8" cy="5.500" rx="5" ry="5" fill="#0a0a0a" /><ellipse cx="8" cy="13.500" rx="4" ry="4.500" fill="#fff" /><path d="M3 9.500c3 1.500 7 1.500 10 0V12c-3 1-7 1-10 0z" fill="#e2231a" /><path d="M3 10h3v5H4z" fill="#e2231a" /><circle cx="6.300" cy="4.500" r="1.300" fill="#fff" /><circle cx="9.700" cy="4.500" r="1.300" fill="#fff" /><ellipse cx="8" cy="7.300" rx="3" ry="1" fill="#f5a61d" /><ellipse cx="5" cy="18.800" rx="3" ry="1.100" fill="#f5a61d" /><ellipse cx="11" cy="18.800" rx="3" ry="1.100" fill="#f5a61d" /></svg></Cell>
      <Cell><WeChat className="w-[21px] h-[17px]" /></Cell>
      <Cell><E360 className="w-[19px] h-[20px]" /></Cell>
      <Cell><svg className="w-[19px] h-[20px]" viewBox="0 0 19 20"><path d="M14 10V4H1v13h10" fill="none" stroke="#fff" strokeWidth="1.500" /><path d="M1 4.500h13" stroke="#fff" strokeWidth="2" /><circle cx="15.500" cy="3.500" r="3.300" fill="#f03a3a" /><circle cx="14.500" cy="15.500" r="4.200" fill="#fff" /><path d="M12.500 15.500h4" stroke="#222" strokeWidth="1.300" /></svg></Cell>
      <Cell><LCircle className="w-[21px] h-[21px]" /></Cell>
      <Cell><svg className="w-[15px] h-[20px]" viewBox="0 0 15 20"><rect width="15" height="20" rx="6.500" fill="#0b7ff0" /><path d="m3.800 6.500 7.200 7L7.500 16.500v-13L11 6.500l-7.200 7" fill="none" stroke="#fff" strokeWidth="1.200" /></svg></Cell>
      <Cell><svg className="w-[18px] h-[19px]" viewBox="0 0 18 19"><path d="M0 0h18v19H0z" fill="#26302a" /><path d="M6 4h12v12H6z" fill="#76b900" /><path d="M1 10c2-4.500 8-5.500 12-1-2 4-8 5.500-12 1z" fill="#9ad02c" stroke="#26401a" strokeWidth="1.200" /><circle cx="8" cy="9.800" r="1.800" fill="#26401a" /></svg></Cell>
      <Cell><svg className="w-[20px] h-[12px]" viewBox="0 0 20 12"><path d="M.6.600h17v10.800H.6z" fill="none" stroke="#fff" strokeWidth="1.200" /><path d="M2.500 2.500h11v7h-11z" fill="#fff" /><path d="M18 3.500h1.700v5H18z" fill="#fff" /></svg></Cell>
      <Cell><svg className="w-[17px] h-[17px]" viewBox="0 0 17 17" fill="none" stroke="#fff" strokeWidth="1.100"><path d="M1.500 14C2.500 7 7.500 2 15 1M5 15c.6-5 4-8.500 10-9.500M8.500 15.500c.5-3 2.500-5 6.500-6M12 16c.3-1.500 1.300-2.300 3-2.800" /></svg></Cell>
      <Cell><svg className="w-[21px] h-[17px]" viewBox="0 0 21 17" fill="none" stroke="#fff" strokeWidth="1.200"><path d="M1 6h2.500L8 2v13l-4.500-4H1z" /><path d="M11 6c1 1.500 1 3.500 0 5" /><path d="M14 3.500c2 3 2 7 0 10M17 1.500c3 4 3 10 0 14" stroke="#8a8a8c" /></svg></Cell>
      <Cell><span className="text-[18px] leading-none">中</span></Cell>
      <Cell w={38}><svg className="w-[21px] h-[20px]" viewBox="0 0 21 20"><path d="m1 3 16-3 3.500 15.500L4 20z" fill="#f0501e" /><path d="M15 5.500c-3-1-8-.8-8.500 1.500-.5 3 8.500 2 8 5-.5 2.500-5.500 2.800-9 1.500" fill="none" stroke="#fff" strokeWidth="2.600" /></svg></Cell>
      <div className="w-[102px] flex flex-col items-center pt-px"><div className="h-[24px] flex items-center tracking-[0.2px]">19:26</div><div className="h-[22px] flex items-center tracking-[0.45px]">2021/11/23</div></div>
      <Cell w={42}><svg className="w-[20px] h-[19px]" viewBox="0 0 20 19"><path d="M0 0h20v14H7l-3.500 4v-4H0z" fill="#fff" /><path d="M3.500 4h13M3.500 7.500h13M3.500 11h7" stroke="#26252a" strokeWidth="1.200" /><path d="M15.500 9.500c1 3-.5 5.500-4 6 2.500 4 8 3 8-1.800 0-2.200-1.500-4-4-4.200z" fill="#fff" stroke="#26252a" /></svg></Cell>
      <div className="w-[14px]" /><div className="w-px h-full bg-[#6d6c70] mr-[5px]" />
    </div>
  );
}
function Ime() {
  return (
    <div className="absolute left-[1782px] top-[1000px] w-[138px] h-[30px] rounded-[5px] bg-[#303030] flex items-center">
      <svg className="w-[31px] h-[30px] ml-[7px]" viewBox="0 0 31 30" fill="none" stroke="#0c9df2" strokeWidth="2.600"><rect x="1.500" y="8.500" width="28" height="13" rx="1" /><path d="M15.500 0v30" /></svg>
      <svg className="w-[16px] h-[20px] ml-[12px]" viewBox="0 0 16 20"><circle cx="3" cy="5" r="1.500" fill="#c4c4c4" /><path d="M11 13h3.500c.5 3-.5 5-3 6.500l-.8-1c1-.8 1.500-1.500 1.300-2.500h-1z" fill="#c4c4c4" /></svg>
      <span className="ml-[8px] text-[22px] leading-none text-[#c4c4c4] -mt-[2px]">半</span>
      <svg className="w-[26px] h-[24px] ml-[8px]" viewBox="0 0 26 24"><path d="M7.500 0c2 3 9 3 11 0L26 6l-3 6-3-1.500V22c0 1-.5 2-2 2H8c-1.500 0-2-1-2-2V10.500L3 12 0 6z" fill="#c8c8c8" /></svg>
    </div>
  );
}

export default function App() {
  return (
    <div className="relative w-[1920px] h-[1080px] overflow-hidden bg-white flex flex-col text-[15px] leading-none cursor-default font-['Open_Sans','Noto_Sans_CJK_SC',sans-serif]">
      <Defs />
      <TitleBar />
      <Tabs />
      <Ribbon />
      <AddressBar />
      <div className="flex h-[765px]"><NavPane /><Content /></div>
      <div className="h-[29px] flex items-center text-[#1e395b] pl-[17px] whitespace-nowrap">
        <span className="w-[79px]">17 个项目</span><div className="w-px h-[13px] bg-[#ececec] mr-[11px]" />
        <span className="w-[105px] tracking-[0.1px]">选中 1 个项目</span><div className="w-px h-[13px] bg-[#ececec]" />
      </div>
      <Taskbar />
      <div className="absolute left-[808px] top-0 w-[302px] h-px bg-[#d4d4d4] flex justify-center"><div className="w-[60px] h-px bg-[#3fa648]" /></div>
      <ContextMenu />
      <Ime />
    </div>
  );
}
